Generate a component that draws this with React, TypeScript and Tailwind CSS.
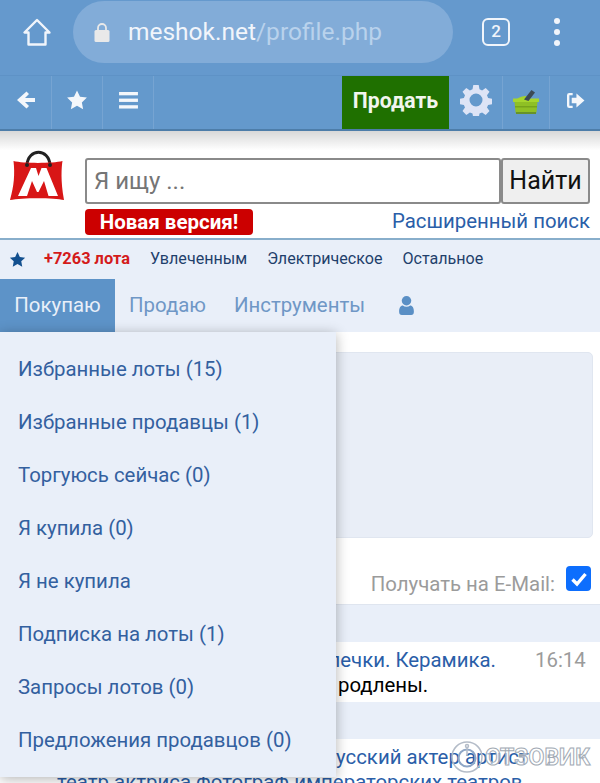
import React from "react";

const menu = [
  "Избранные лоты (15)",
  "Избранные продавцы (1)",
  "Торгуюсь сейчас (0)",
  "Я купила (0)",
  "Я не купила",
  "Подписка на лоты (1)",
  "Запросы лотов (0)",
  "Предложения продавцов (0)",
];

function Star({ className }: { className: string }) {
  return (
    <svg viewBox="0 0 24 24" className={className} fill="currentColor">
      <path d="M12 1.5l3.3 6.9 7.5 1-5.5 5.2 1.400 7.500L12 18.400l-6.700 3.700 1.400-7.500L1.200 9.400l7.500-1z" />
    </svg>
  );
}

function Gear() {
  return (
    <svg viewBox="0 0 32 32" className="w-[32px] h-[32px]" fill="#dde4f6">
      <path
        fillRule="evenodd"
        d="M13.300 1h5.400l.8 4.300 2.600 1.100 3.600-2.500 3.800 3.800-2.500 3.600 1.100 2.600 4.300.8v5.400l-4.300.8-1.100 2.600 2.500 3.600-3.800 3.800-3.600-2.500-2.600 1.100-.8 4.300h-5.400l-.8-4.300-2.600-1.100-3.600 2.500-3.800-3.800 2.500-3.600-1.100-2.600-4.300-.8v-5.400l4.300-.8 1.100-2.600-2.500-3.600 3.800-3.800 3.600 2.500 2.600-1.100zM16 9.500a6.500 6.500 0 100 13 6.500 6.500 0 000-13z"
      />
    </svg>
  );
}

function Basket() {
  return (
    <svg viewBox="0 0 28 26" className="w-[28px] h-[26px]">
      <path d="M5 10c2-2 6-3 9-3l4 3z" fill="#a3d32c" />
      <path d="M1 9.500h26v3.500H1z" fill="#a6d62e" />
      <path d="M2.500 13h23l-1 10a2 2 0 01-2 2h-17a2 2 0 01-2-2z" fill="#8fc025" />
      <path d="M3 17h22v1.500H3z" fill="#76a41b" />
      <path d="M4 23h20v2H4z" fill="#67922a" />
      <path d="M12 10.500L19.500 1l3.500 2.500L16.500 12z" fill="#3c4a55" />
    </svg>
  );
}

function Logo() {
  return (
    <svg viewBox="0 0 54 54" className="w-[56px] h-[54px] shrink-0">
      <path d="M16 15c1-17 22-17 23 0" fill="none" stroke="#222" strokeWidth="3" />
      <path d="M2.500 11c10 2.500 39 2.500 49 0-1 6-2 20 1.500 39-10-2.500-42-2.500-54 0 4-14 5-26 3.500-39z" fill="#d81616" />
      <path d="M7 46L20 18h5l2.500 8 3-8h5L47 46h-9.500L33 31l-5.500 11h-1.500l-5-11-5 15z" fill="#fff" />
      <circle cx="16" cy="15" r="2" fill="#222" />
      <circle cx="39" cy="15" r="2" fill="#222" />
    </svg>
  );
}

function NavCell({ children, className }: { children: React.ReactNode; className: string }) {
  return (
    <div className={`flex items-center justify-center h-full pb-[5px] border-r border-[#76a4d2] ${className}`}>
      {children}
    </div>
  );
}

export default function App() {
  return (
    <div className="relative w-[600px] h-[783px] overflow-hidden bg-white font-['Roboto',sans-serif]">
      {/* Browser bar */}
      <div className="h-[75px] bg-[#6599cd] flex items-start">
        <div className="w-[73px] h-[63px] flex items-center justify-center">
          <svg viewBox="0 0 30 30" className="w-[30px] h-[30px]" fill="none" stroke="#f1f5fb" strokeWidth="2.400" strokeLinejoin="round">
            <path d="M15 3L2.500 15.500H6.500V27.500H23.500V15.500H27.500z" />
          </svg>
        </div>
        <div className="w-[380px] h-[62px] mt-px rounded-full bg-[#82acd8] flex items-center pl-[21px]">
          <svg viewBox="0 0 16 20" className="w-[16px] h-[21px] mr-[18px]">
            <path d="M4 8V5.500a4 4 0 018 0V8" fill="none" stroke="#e9e9e9" strokeWidth="1.800" />
            <rect x="0.500" y="7.500" width="15" height="12" rx="1.500" fill="#e9e9e9" />
          </svg>
          <span className="text-[24.500px] leading-none text-[#f1f5fb]">meshok.net</span>
          <span className="text-[24.500px] leading-none text-[#b9d2ec]">/profile.php</span>
        </div>
        <div className="flex-1 h-[63px] flex items-center pl-[29px]">
          <div className="w-[28px] h-[28px] rounded-[6px] border-[2.500px] border-[#f1f5fb] flex items-center justify-center text-[17px] font-medium text-[#f1f5fb]">
            2
          </div>
          <div className="ml-[44px] flex flex-col gap-[5px]">
            <div className="w-[6px] h-[6px] rounded-full bg-[#f1f5fb]" />
            <div className="w-[6px] h-[6px] rounded-full bg-[#f1f5fb]" />
            <div className="w-[6px] h-[6px] rounded-full bg-[#f1f5fb]" />
          </div>
        </div>
      </div>
      {/* Site nav */}
      <div className="h-[56px] bg-[#6499cc] border-t border-t-[#5e92c6] border-b-[2px] border-b-[#4d7da9] flex items-center">
        <NavCell className="w-[52px]">
          <svg viewBox="0 0 20 20" className="w-[20px] h-[20px]" fill="#f4f7fb">
            <path d="M10.500 1.500L1 10l9.500 8.500 2.500-2.500-4-4h10V8H9l4-4z" />
          </svg>
        </NavCell>
        <NavCell className="w-[51px]">
          <Star className="w-[22px] h-[22px] text-[#f4f7fb]" />
        </NavCell>
        <NavCell className="w-[51px]">
          <svg viewBox="0 0 20 18" className="w-[19px] h-[17px]" fill="#f4f7fb">
            <rect x="0" y="0" width="20" height="3.500" />
            <rect x="0" y="7" width="20" height="3.500" />
            <rect x="0" y="14" width="20" height="3.500" />
          </svg>
        </NavCell>
        <div className="w-[188px]" />
        <div className="w-[107px] h-full pb-[3px] bg-[#1f7000] flex items-center justify-center text-[21.200px] font-bold text-[#f2f6ee]">
          Продать
        </div>
        <NavCell className="w-[54px] pl-[1px]">
          <Gear />
        </NavCell>
        <NavCell className="w-[47px] pt-[3px]">
          <Basket />
        </NavCell>
        <div className="flex-1 h-full pb-[5px] flex items-center justify-center">
          <svg viewBox="0 0 20 18" className="w-[19px] h-[17px]" fill="#f4f7fb">
            <path d="M7 1H3.500A2.500 2.500 0 001 3.500v11A2.500 2.500 0 003.500 17H7v-2.500H3.500v-11H7z" />
            <path d="M11 1.500l8.500 7.500-8.500 7.500V12H6V6h5z" />
          </svg>
        </div>
      </div>
      {/* Search head */}
      <div className="h-[109px] bg-gradient-to-b from-[#d8d8d8] via-white via-[18%] to-white border-b-[2px] border-b-[#88aecb] flex pl-[10px] pr-[10px]">
        <div className="w-[75px] pt-[19px]">
          <Logo />
        </div>
        <div className="flex-1 pt-[27px]">
          <div className="flex h-[46px]">
            <div className="flex-1 border-[2px] border-[#8a8a8a] rounded-[3px] bg-white flex items-center pl-[7px] text-[24px] text-[#757575]">
              Я ищу ...
            </div>
            <div className="w-[89px] border-[2px] border-[#8a8a8a] rounded-[3px] bg-[#efefef] flex items-center justify-center text-[25px] text-[#111]">
              Найти
            </div>
          </div>
          <div className="flex items-start justify-between mt-[5px]">
            <div className="w-[168px] h-[26px] rounded-[4px] bg-[#cc0000] flex items-center justify-center text-[20.500px] font-bold text-white">
              Новая версия!
            </div>
            <span className="text-[20.400px] leading-[24px] text-[#2a5ea8]">Расширенный поиск</span>
          </div>
        </div>
      </div>
      {/* Sub links */}
      <div className="h-[39px] bg-[#e9eff9] flex items-center pl-[9px] text-[16.100px] text-[#1f3f6c]">
        <Star className="w-[17px] h-[17px] text-[#13508f] mr-[18px]" />
        <span className="font-bold text-[16.400px] text-[#d41b1b] mr-[20px]">+7263 лота</span>
        <span className="mr-[20px]">Увлеченным</span>
        <span className="mr-[20px]">Электрическое</span>
        <span>Остальное</span>
      </div>
      {/* Tabs */}
      <div className="h-[53px] bg-[#e9eff9] flex text-[20.400px] text-[#6f97c6]">
        <div className="w-[115px] bg-[#5d93c8] flex items-center justify-center text-[#e9eff9]">Покупаю</div>
        <div className="ml-[14px] flex items-center">Продаю</div>
        <div className="ml-[28px] flex items-center">Инструменты</div>
        <div className="ml-[34px] flex items-center">
          <svg viewBox="0 0 14 18" className="w-[15px] h-[19px]" fill="#5a8fc5">
            <circle cx="7" cy="4.500" r="4.500" />
            <path d="M0 15c0-4 1.500-6 3.500-6 1 .8 2.200 1.200 3.500 1.200S9.500 9.800 10.500 9C12.500 9 14 11 14 15c0 2-1 3-2.500 3h-9C1 18 0 17 0 15z" />
          </svg>
        </div>
      </div>
      {/* Underlying page content */}
      <div className="pt-[20px] relative">
        <div className="ml-[300px] mr-[7px] h-[186px] bg-[#e9eef7] border border-[#e0e6f0] rounded-[5px]" />
        <div className="h-[66px] flex items-start justify-end pt-[28px] pr-[9px]">
          <span className="text-[20.400px] leading-none mt-[8px] text-[#9b9b9b]">Получать на E-Mail:</span>
          <div className="ml-[11px] w-[25px] h-[25px] rounded-[4px] bg-[#0d6efd] flex items-center justify-center">
            <svg viewBox="0 0 20 20" className="w-[20px] h-[20px]" fill="none" stroke="#fff" strokeWidth="3.400">
              <path d="M3.500 10.500l4.500 4.500 8.500-10" />
            </svg>
          </div>
        </div>
        <div className="bg-[#e9eff9] border-t border-t-[#dfe5ef] h-[38px]" />
        <div className="bg-white h-[60px] pl-[57px] pr-[15px] pt-[6px] text-[20.400px] leading-[25px] relative flex justify-end">
          <div className="flex-1 text-right pr-[39px]">
            <div className="text-[#2a5ea8] whitespace-nowrap">Колечки. Керамика.</div>
          </div>
          <div className="text-[#9b9b9b] w-[50px]">16:14</div>
          <div className="absolute left-[338px] top-[31px] text-black whitespace-nowrap">родлены.</div>
        </div>
        <div className="bg-[#e9eff9] h-[37px]" />
        <div className="bg-white h-[60px] pl-[57px] pt-[6px] text-[20.400px] leading-[25px] text-[#2a5ea8] whitespace-nowrap relative">
          <div className="pl-[279px]">усский актер артист</div>
          <div>театр актриса фотограф императорских театров</div>
        </div>
      </div>
      {/* Watermark */}
      <div className="absolute left-[451px] top-[741px] flex items-center text-white/60">
        <svg viewBox="0 0 32 32" className="w-[32px] h-[32px]" fill="none" stroke="#b4bcc8" strokeWidth="1.500">
          <circle cx="16" cy="16" r="15" />
          <circle cx="16" cy="17" r="8.500" stroke="#8fa6c6" strokeWidth="2" />
          <path d="M16 6v9" />
          <circle cx="16" cy="5" r="1.500" />
        </svg>
        <span className="ml-[2px] text-[23px] leading-none font-bold [-webkit-text-stroke:1px_#a2aab4]">ОТЗОВИК</span>
      </div>
      {/* Dropdown */}
      <div className="absolute left-0 top-[332px] w-[336px] h-[445px] bg-[#e9eff9] shadow-[0_2px_12px_rgba(0,0,0,0.3)] pt-[11px] flex flex-col text-[20.400px] text-[#33609f]">
        {menu.map((m) => (
          <div key={m} className="h-[53px] shrink-0 pl-[18px] flex items-center">
            {m}
          </div>
        ))}
      </div>
    </div>
  );
}
